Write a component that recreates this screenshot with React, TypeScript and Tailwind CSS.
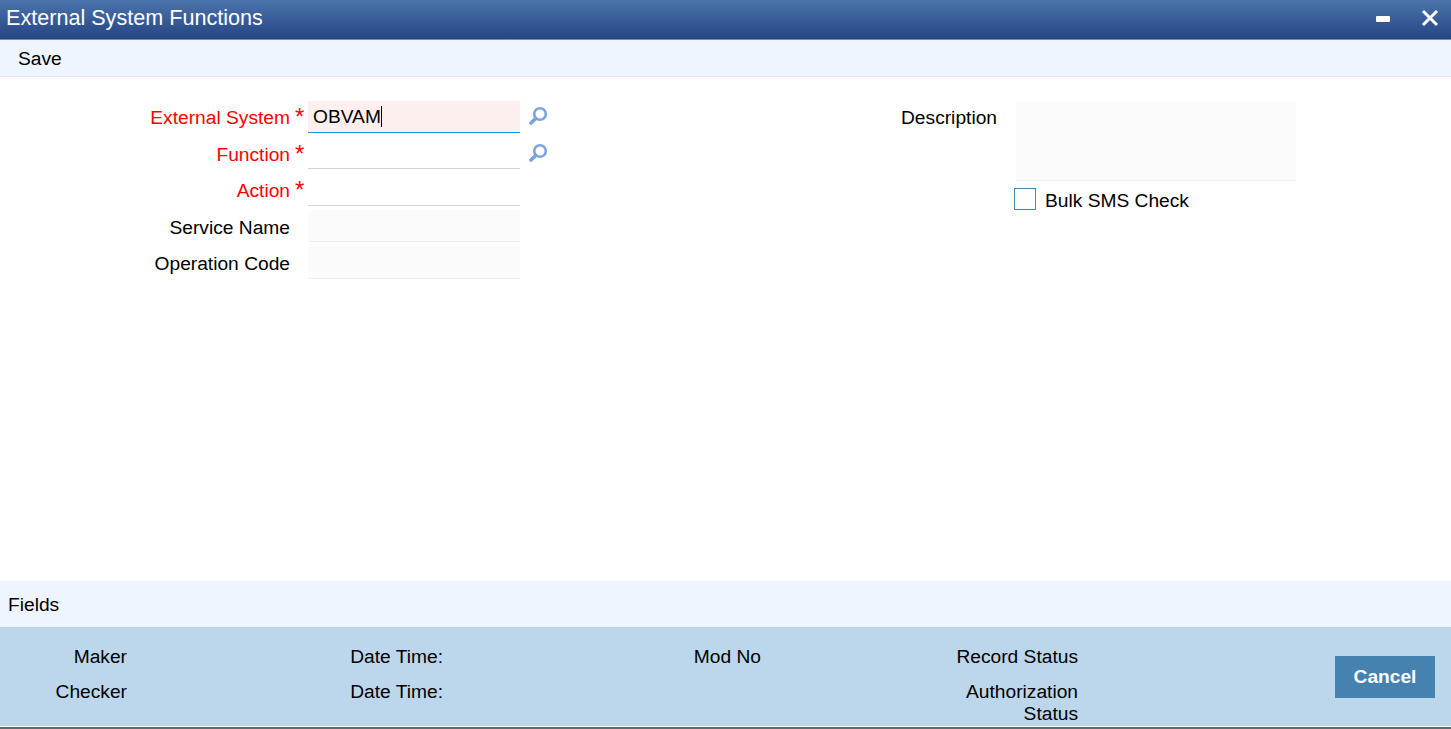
import React from "react";

const font = { fontFamily: '"Liberation Sans", Arial, sans-serif' };

function Lens() {
  return (
    <svg width="20" height="20" viewBox="0 0 20 20" className="block">
      <circle cx="12" cy="8" r="5.8" fill="none" stroke="#7aa3e0" strokeWidth="2.6" />
      <path d="M7.8 12.4 L3 17" stroke="#7aa3e0" strokeWidth="3.6" strokeLinecap="round" />
    </svg>
  );
}

function Row({ label, required, variant, value, lens, even }: { label: string; required?: boolean; variant: "focus" | "plain" | "ro"; value?: string; lens?: boolean; even?: boolean }) {
  const box =
    variant === "focus"
      ? "bg-[#fdefed] border-b border-[#0f9ad8]"
      : variant === "plain"
      ? "bg-white border-b border-[#d4d4d4]"
      : "bg-[#fbfbfb] border-b border-[#f0f0f0]";
  return (
    <div className={`flex items-start ${even ? "h-[37px]" : "h-[36px]"}`}>
      <div className={`w-[290px] text-right text-[19.2px] leading-[26px] ${even ? "pt-[5px]" : "pt-[4px]"} ${required ? "text-[#ff0000]" : "text-black"}`}>{label}</div>
      <div className={`w-[18px] pl-[5px] text-[24px] leading-[24px] text-[#ff0000] ${even ? "pt-[5px]" : "pt-[4px]"}`}>{required ? "*" : ""}</div>
      <div className={`h-[32px] w-[212px] pl-[5px] pt-[1px] text-[19.2px] leading-[27px] text-black ${box}`}>
        {value}
        {value ? <span className="inline-block h-[21px] w-px translate-y-[4px] bg-black" /> : null}
      </div>
      {lens ? (
        <div className={`ml-[8px] ${even ? "pt-[6px]" : "pt-[5px]"}`}>
          <Lens />
        </div>
      ) : null}
    </div>
  );
}

function Audit({ width, label, className = "" }: { width: string; label: string; className?: string }) {
  return <div className={`text-right text-[19.2px] leading-[22px] ${width} ${className}`}>{label}</div>;
}

export default function App() {
  return (
    <div style={font} className="flex h-[729px] w-[1451px] flex-col overflow-hidden bg-white text-black">
      <header className="flex h-[40px] shrink-0 items-center justify-between border-b border-[#6f8fb5] bg-gradient-to-b from-[#4c74ac] to-[#254584] pl-[6px] pr-[12px] text-white">
        <h1 className="-translate-y-[2px] text-[21.6px] font-normal leading-[36px]">External System Functions</h1>
        <div className="flex items-center gap-[28px]">
          <svg width="16" height="8" viewBox="0 0 16 8" className="-translate-y-[1px] -translate-x-[2px]"><rect x="1" y="1" width="14" height="6" rx="1" fill="#fff" /></svg>
          <svg width="18" height="18" viewBox="0 0 18 18" className="-translate-y-[2px]"><path d="M2 2 L16 16 M16 2 L2 16" stroke="#fff" strokeWidth="3" /></svg>
        </div>
      </header>
      <nav className="flex h-[37px] shrink-0 items-center border-b border-[#e8e8e8] bg-[#eef5fe] pl-[18px] pt-[2px] text-[19.2px] leading-[36px]">Save</nav>
      <main className="flex min-h-0 flex-1 pt-[24px]">
        <section className="w-[900px]">
          <Row label="External System" required variant="focus" value="OBVAM" lens />
          <Row label="Function" required variant="plain" lens even />
          <Row label="Action" required variant="plain" />
          <Row label="Service Name" variant="ro" even />
          <Row label="Operation Code" variant="ro" />
        </section>
        <section className="flex items-start">
          <div className="w-[97px] pt-[4px] text-right text-[19.2px] leading-[26px]">Description</div>
          <div className="ml-[19px]">
            <div className="h-[80px] w-[280px] border-b border-[#f0f0f0] bg-[#fbfbfb]" />
            <div className="mt-[7px] -ml-[2px] flex items-start">
              <div className="h-[22px] w-[22px] border border-[#4a84ad] bg-white" />
              <span className="ml-[9px] mt-[1px] text-[19.2px] leading-[24px]">Bulk SMS Check</span>
            </div>
          </div>
        </section>
      </main>
      <div className="flex h-[46px] shrink-0 items-center bg-[#eef5fe] pl-[8px] pt-[2px] text-[19.2px]">Fields</div>
      <footer className="relative flex h-[99px] shrink-0 bg-[#bcd7ec] pt-[19px]">
        <div className="w-[127px] space-y-[13px]">
          <Audit width="w-full" label="Maker" />
          <Audit width="w-full" label="Checker" />
        </div>
        <div className="w-[316px] space-y-[13px]">
          <Audit width="w-full" label="Date Time:" />
          <Audit width="w-full" label="Date Time:" />
        </div>
        <div className="w-[318px]">
          <Audit width="w-full" label="Mod No" />
        </div>
        <div className="w-[317px] space-y-[13px]">
          <Audit width="w-full" label="Record Status" />
          <Audit width="w-full" label="Authorization Status" className="pl-[190px]" />
        </div>
        <button className="absolute right-[16px] top-[29px] h-[42px] w-[100px] bg-[#4682b0] text-[19.2px] font-bold text-white">Cancel</button>
      </footer>
      <div className="h-[1px] shrink-0 bg-white" />
      <div className="h-[2px] shrink-0 bg-[#5d6d6d]" />
    </div>
  );
}
